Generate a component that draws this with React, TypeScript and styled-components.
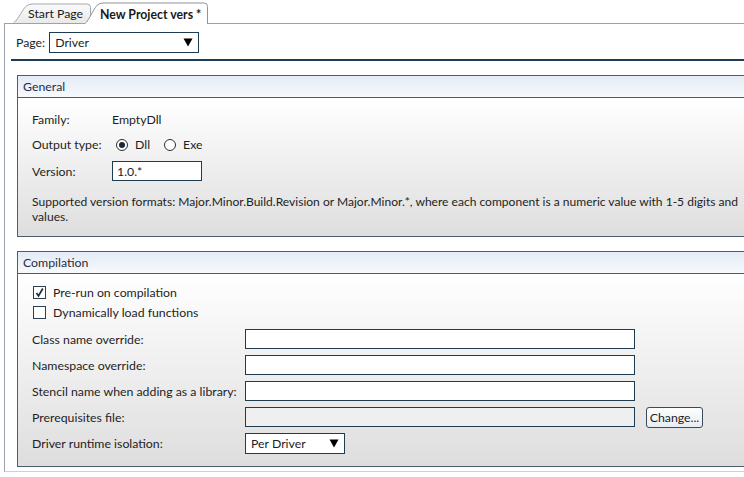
import React from 'react';
import styled, { createGlobalStyle } from 'styled-components';

const Global = createGlobalStyle`
  html, body { margin: 0; padding: 0; background: #fff; }
  body { font-family: Lato, "Segoe UI", "Noto Sans", sans-serif; font-size: 12.3px; color: #1e1e1e; }
  * { box-sizing: border-box; }
`;

const Screen = styled.div`
  width: 744px;
  height: 477px;
  overflow: hidden;
  background: #fff;
  display: flex;
  flex-direction: column;
  padding-top: 1px;
`;

const TabStrip = styled.div`
  height: 22px;
  flex: none;
  display: flex;
  align-items: flex-end;
  padding-left: 13px;
  position: relative;
  z-index: 2;
`;

const Tab = styled.div<{ $active?: boolean; $w: number }>`
  position: relative;
  width: ${p => p.$w}px;
  height: ${p => (p.$active ? 22 : 20)}px;
  margin-bottom: ${p => (p.$active ? -1 : 0)}px;
  margin-left: ${p => (p.$active ? -8 : 0)}px;
  z-index: ${p => (p.$active ? 2 : 1)};
  padding-left: ${p => (p.$active ? 16 : 15)}px;
  padding-top: ${p => (p.$active ? 5 : 3)}px;
  font-weight: ${p => (p.$active ? 700 : 400)};
  color: #1a1a1a;
  white-space: nowrap;
  & > span { position: relative; }
`;

const TabShape = styled.svg`
  position: absolute;
  left: 0;
  top: 0;
`;

const Frame = styled.div`
  flex: 1;
  margin: 0 0 5px 4px;
  border-left: 1px solid #9aa3ad;
  border-top: 1px solid #9aa3ad;
  border-bottom: 1px solid #c9d1da;
  display: flex;
  flex-direction: column;
`;

const Toolbar = styled.div`
  height: 35px;
  display: flex;
  align-items: center;
  padding: 2px 0 0 11px;
  gap: 4px;
`;

const Select = styled.div<{ $w: number }>`
  width: ${p => p.$w}px;
  height: 21px;
  border: 1px solid #1f3b50;
  background: #fff;
  display: flex;
  align-items: center;
  justify-content: space-between;
  padding: 0 5px 0 5px;
`;

const Divider = styled.div`
  height: 2px;
  margin-left: 6px;
  background: #1d3c58;
`;

const Panels = styled.div`
  padding: 14px 0 0 12px;
  display: flex;
  flex-direction: column;
  gap: 14px;
`;

const Panel = styled.section`
  border: 1px solid #4d5d70;
  margin-right: -80px;
  display: flex;
  flex-direction: column;
`;

const PanelHeader = styled.div`
  height: 22px;
  padding-left: 5px;
  display: flex;
  align-items: center;
  border-bottom: 1px solid #4d5d70;
  background: linear-gradient(#e4ebf5, #f7f9fc);
  color: #1e2e44;
`;

const PanelBody = styled.div<{ $pt: number; $pb: number }>`
  padding: ${p => p.$pt}px 14px ${p => p.$pb}px 14px;
  background: linear-gradient(#ffffff, #dedede);
`;

const InfoGrid = styled.div`
  display: grid;
  grid-template-columns: 80px auto;
  grid-template-rows: 25px 25px 28px;
  align-items: center;
`;

const Value = styled.div`
  display: flex;
  align-items: center;
`;

const RadioDot = styled.span<{ $on?: boolean }>`
  width: 12px;
  height: 12px;
  border-radius: 50%;
  border: 1px solid #2e2e2e;
  background: #fff;
  display: inline-flex;
  align-items: center;
  justify-content: center;
  margin: 0 7px 0 4px;
  &::after {
    content: '';
    width: 6px;
    height: 6px;
    border-radius: 50%;
    background: ${p => (p.$on ? '#1a2838' : 'transparent')};
  }
`;

const RadioLabel = styled.span`
  margin-right: 10px;
`;

const TextBox = styled.div<{ $w: number; $disabled?: boolean }>`
  width: ${p => p.$w}px;
  height: 20px;
  border: 1px solid #1f3b50;
  background: ${p => (p.$disabled ? '#efefef' : '#fff')};
  display: flex;
  align-items: center;
  padding-left: 4px;
`;

const Note = styled.div`
  margin-top: 9px;
  line-height: 15px;
  white-space: nowrap;
  font-size: 12.05px;
`;

const CheckRow = styled.label`
  height: 20px;
  display: flex;
  align-items: center;
  gap: 7px;
  padding-left: 1px;
`;

const CheckBox = styled.span`
  width: 13px;
  height: 13px;
  border: 1px solid #2a3f52;
  background: #fff;
  display: inline-flex;
  align-items: center;
  justify-content: center;
`;

const FieldGrid = styled.div`
  margin-top: 4px;
  display: grid;
  grid-template-columns: 213px auto;
  grid-auto-rows: 26px;
  align-items: center;
`;

const FieldCell = styled.div`
  display: flex;
  align-items: center;
`;

const Button = styled.div`
  margin-left: 11px;
  width: 57px;
  height: 21px;
  border: 1px solid #3d4a5a;
  border-radius: 3px;
  background: linear-gradient(#fdfdfd, #e7edf4);
  display: flex;
  align-items: center;
  justify-content: center;
`;

const tabPath = (w: number, h: number) =>
  `M0.5,${h} C6,${h - 4} 10,4 15,2 Q17,1 19,1 L${w - 5},1 Q${w - 1.5},1 ${w - 1.5},4.5 L${w - 1.5},${h}`;

const TabView: React.FC<{ w: number; active?: boolean; label: string }> = ({ w, active, label }) => {
  const h = active ? 22 : 20;
  return (
    <Tab $w={w} $active={active}>
      <TabShape width={w} height={h} viewBox={`0 0 ${w} ${h}`}>
        <defs>
          <linearGradient id="tabg" x1="0" y1="0" x2="0" y2="1">
            <stop offset="0" stopColor="#fbfbfb" />
            <stop offset="1" stopColor="#e9e9e9" />
          </linearGradient>
        </defs>
        <path d={tabPath(w, h)} fill={active ? '#fff' : 'url(#tabg)'} stroke={active ? '#8d949c' : '#a3a9af'} strokeWidth={1} />
      </TabShape>
      <span>{label}</span>
    </Tab>
  );
};

const Arrow = () => (
  <svg width="10" height="9" viewBox="0 0 10 9">
    <path d="M0.5,0.5 L9.5,0.5 L5,8.5 Z" fill="#000" />
  </svg>
);

const Check = () => (
  <svg width="11" height="11" viewBox="0 0 11 11">
    <path d="M2.5,6 L4.5,9 L8.8,1.5" fill="none" stroke="#1c2e40" strokeWidth="1.7" />
  </svg>
);

const fields: { label: string; kind: 'text' | 'disabled' | 'select' }[] = [
  { label: 'Class name override:', kind: 'text' },
  { label: 'Namespace override:', kind: 'text' },
  { label: 'Stencil name when adding as a library:', kind: 'text' },
  { label: 'Prerequisites file:', kind: 'disabled' },
  { label: 'Driver runtime isolation:', kind: 'select' },
];

export default function App() {
  return (
    <>
      <Global />
      <Screen>
        <TabStrip>
          <TabView w={79} label="Start Page" />
          <TabView w={125} active label="New Project vers *" />
        </TabStrip>
        <Frame>
          <Toolbar>
            <span>Page:</span>
            <Select $w={150}>
              <span>Driver</span>
              <Arrow />
            </Select>
          </Toolbar>
          <Divider />
          <Panels>
            <Panel>
              <PanelHeader>General</PanelHeader>
              <PanelBody $pt={9} $pb={12}>
                <InfoGrid>
                  <span>Family:</span>
                  <Value>EmptyDll</Value>
                  <span>Output type:</span>
                  <Value>
                    <RadioDot $on />
                    <RadioLabel>Dll</RadioLabel>
                    <RadioDot />
                    <RadioLabel>Exe</RadioLabel>
                  </Value>
                  <span>Version:</span>
                  <Value>
                    <TextBox $w={90}>1.0.*</TextBox>
                  </Value>
                </InfoGrid>
                <Note>
                  Supported version formats: Major.Minor.Build.Revision or Major.Minor.*, where each component is a numeric value with 1-5 digits and
                  <br />
                  values.
                </Note>
              </PanelBody>
            </Panel>
            <Panel>
              <PanelHeader>Compilation</PanelHeader>
              <PanelBody $pt={8} $pb={10}>
                <CheckRow>
                  <CheckBox>
                    <Check />
                  </CheckBox>
                  Pre-run on compilation
                </CheckRow>
                <CheckRow>
                  <CheckBox />
                  Dynamically load functions
                </CheckRow>
                <FieldGrid>
                  {fields.map(f => (
                    <React.Fragment key={f.label}>
                      <span>{f.label}</span>
                      <FieldCell>
                        {f.kind === 'select' ? (
                          <Select $w={100}>
                            <span>Per Driver</span>
                            <Arrow />
                          </Select>
                        ) : (
                          <TextBox $w={390} $disabled={f.kind === 'disabled'} />
                        )}
                        {f.kind === 'disabled' && <Button>Change...</Button>}
                      </FieldCell>
                    </React.Fragment>
                  ))}
                </FieldGrid>
              </PanelBody>
            </Panel>
          </Panels>
        </Frame>
      </Screen>
    </>
  );
}
